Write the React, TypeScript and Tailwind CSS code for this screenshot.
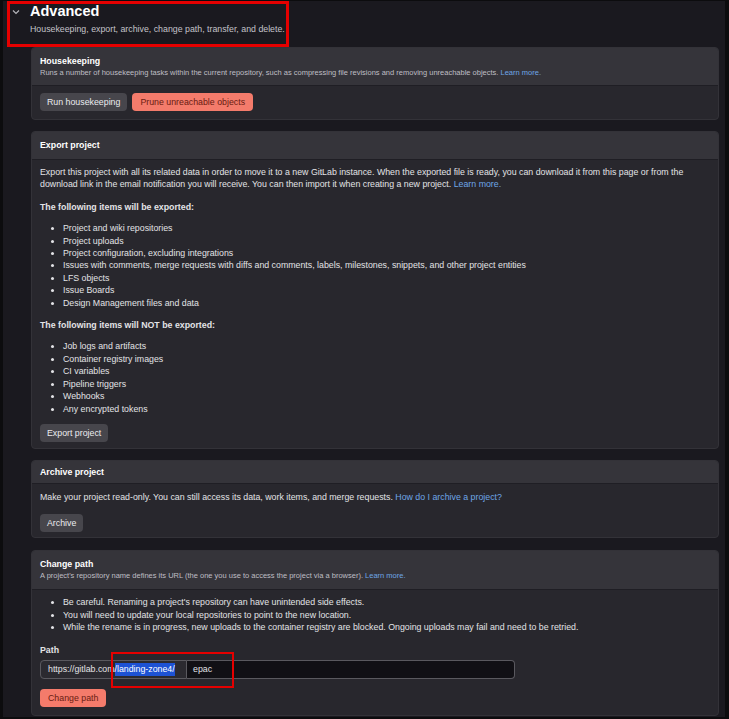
import React from 'react';

const exported = [
  'Project and wiki repositories',
  'Project uploads',
  'Project configuration, excluding integrations',
  'Issues with comments, merge requests with diffs and comments, labels, milestones, snippets, and other project entities',
  'LFS objects',
  'Issue Boards',
  'Design Management files and data',
];

const notExported = [
  'Job logs and artifacts',
  'Container registry images',
  'CI variables',
  'Pipeline triggers',
  'Webhooks',
  'Any encrypted tokens',
];

const pathNotes = [
  "Be careful. Renaming a project's repository can have unintended side effects.",
  'You will need to update your local repositories to point to the new location.',
  'While the rename is in progress, new uploads to the container registry are blocked. Ongoing uploads may fail and need to be retried.',
];

const Bullets = ({ items, className = '' }: { items: string[]; className?: string }) => (
  <ul className={`list-disc pl-[23px] ${className}`}>
    {items.map((t) => (
      <li key={t}>{t}</li>
    ))}
  </ul>
);

const Link = ({ children }: { children: React.ReactNode }) => (
  <span className="text-[#6ea6e6]">{children}</span>
);

const GreyButton = ({ children }: { children: React.ReactNode }) => (
  <button className="h-[18px] px-[7px] rounded-[4px] bg-[#47464c] text-[#ececef] text-[8.8px] leading-none">
    {children}
  </button>
);

const SalmonButton = ({ children }: { children: React.ReactNode }) => (
  <button className="h-[18px] px-[8px] rounded-[4px] bg-[#f47b6b] text-[#6a1c12] text-[8.8px] leading-none">
    {children}
  </button>
);

export default function App() {
  return (
    <div
      className="w-[729px] h-[719px] overflow-hidden bg-[#0c0c0e] pl-[3px] pr-[4px] pt-[1px] pb-[2px]"
      style={{ fontFamily: '"Liberation Sans", Arial, sans-serif' }}
    >
      <div className="relative h-full bg-[#1a191f] text-[#e3e3e6] text-[8.8px] leading-[12.4px]">
        {/* Section header */}
        <div className="flex">
          <div className="w-[27px] pl-[9px] pt-[8px]">
            <svg width="8" height="6" viewBox="0 0 8 6" fill="none">
              <path d="M1 1.5 L4 4.5 L7 1.5" stroke="#b5b4ba" strokeWidth="1.2" />
            </svg>
          </div>
          <div>
            <h2 className="text-[14.5px] leading-[20px] font-bold text-white">Advanced</h2>
            <p className="mt-[2px] text-[8.8px] leading-[12px] text-[#c4c3c9]">
              Housekeeping, export, archive, change path, transfer, and delete.
            </p>
          </div>
        </div>

        <div className="ml-[28px] mr-[6px] mt-[12px] flex flex-col gap-[11px]">
          {/* Housekeeping */}
          <section className="rounded-[4px] overflow-hidden border border-[#333238] bg-[#28272d]">
            <div className="h-[38px] bg-[#35343a] border-b border-[#1f1e24] px-[8px] pt-[7px]">
              <h3 className="font-bold text-white leading-[12px]">Housekeeping</h3>
              <p className="text-[7.5px] leading-[12px] text-[#bfbec4]">
                Runs a number of housekeeping tasks within the current repository, such as compressing file revisions and removing unreachable objects. <Link>Learn more.</Link>
              </p>
            </div>
            <div className="px-[8px] pt-[7px] pb-[8px] flex gap-[5px]">
              <GreyButton>Run housekeeping</GreyButton>
              <SalmonButton>Prune unreachable objects</SalmonButton>
            </div>
          </section>

          {/* Export project */}
          <section className="rounded-[4px] overflow-hidden border border-[#333238] bg-[#28272d]">
            <div className="h-[28px] bg-[#35343a] border-b border-[#1f1e24] px-[8px] flex items-center">
              <h3 className="font-bold text-white">Export project</h3>
            </div>
            <div className="px-[8px] pt-[6px] pb-[6px]">
              <p className="mb-[10px]">
                Export this project with all its related data in order to move it to a new GitLab instance. When the exported file is ready, you can download it from this page or from the download link in the email notification you will receive. You can then import it when creating a new project. <Link>Learn more.</Link>
              </p>
              <p className="font-bold mb-[9px]">The following items will be exported:</p>
              <Bullets items={exported} className="mb-[10px]" />
              <p className="font-bold mb-[9px]">The following items will NOT be exported:</p>
              <Bullets items={notExported} className="mb-[9px]" />
              <GreyButton>Export project</GreyButton>
            </div>
          </section>

          {/* Archive project */}
          <section className="rounded-[4px] overflow-hidden border border-[#333238] bg-[#28272d]">
            <div className="h-[23px] bg-[#35343a] border-b border-[#1f1e24] px-[8px] flex items-center">
              <h3 className="font-bold text-white">Archive project</h3>
            </div>
            <div className="px-[8px] pt-[7px] pb-[5px]">
              <p className="mb-[11px]">
                Make your project read-only. You can still access its data, work items, and merge requests. <Link>How do I archive a project?</Link>
              </p>
              <GreyButton>Archive</GreyButton>
            </div>
          </section>

          {/* Change path */}
          <section className="mt-[1px] rounded-[4px] overflow-hidden border border-[#333238] bg-[#28272d]">
            <div className="h-[39px] bg-[#35343a] border-b border-[#1f1e24] px-[8px] pt-[7px]">
              <h3 className="font-bold text-white leading-[12px]">Change path</h3>
              <p className="text-[7.5px] leading-[12px] text-[#bfbec4]">
                A project's repository name defines its URL (the one you use to access the project via a browser). <Link>Learn more.</Link>
              </p>
            </div>
            <div className="px-[8px] pt-[6px] pb-[8px]">
              <Bullets items={pathNotes} className="mb-[10px]" />
              <p className="font-bold mb-[4px]">Path</p>
              <div className="flex h-[19px] mb-[10px]">
                <div className="w-[147px] flex items-center pl-[7px] bg-[#2b2a30] border border-[#5a595f] rounded-l-[4px] whitespace-nowrap">
                  https://gitlab.com<span className="bg-[#1d52d4] text-white">/landing-zone4/</span>
                </div>
                <div className="w-[328px] flex items-center pl-[6px] bg-[#111015] border border-l-0 border-[#5a595f] rounded-r-[4px]">
                  epac
                </div>
              </div>
              <SalmonButton>Change path</SalmonButton>
            </div>
          </section>
        </div>

        {/* Annotation boxes */}
        <div className="absolute left-[4px] top-[0px] w-[282px] h-[46px] border-[3px] border-[#e50000]" />
        <div className="absolute left-[108px] top-[651px] w-[123px] h-[36px] border-[2px] border-[#e50000]" />
      </div>
    </div>
  );
}
